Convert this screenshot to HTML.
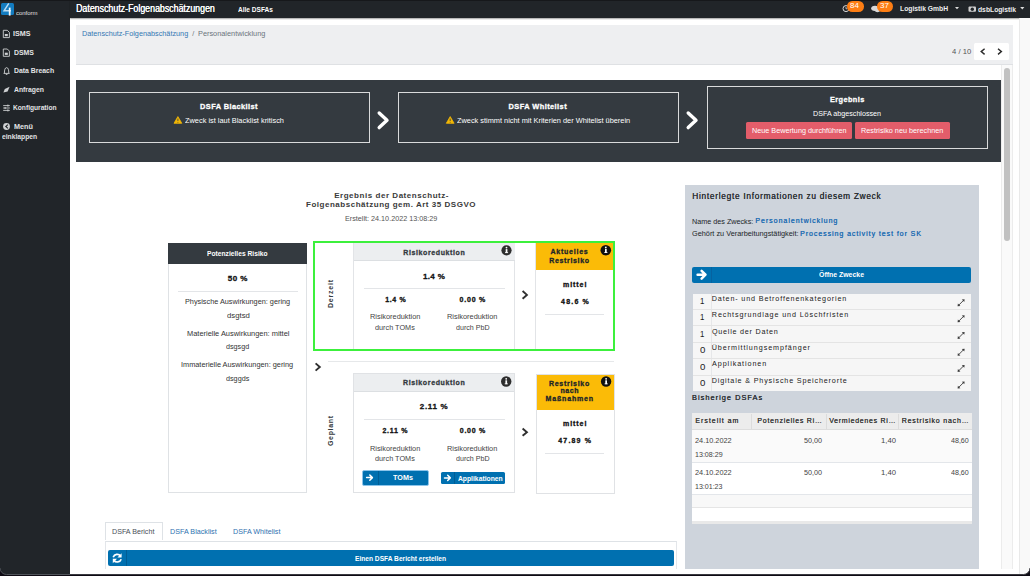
<!DOCTYPE html>
<html><head><meta charset="utf-8"><style>
*{box-sizing:border-box;margin:0;padding:0}
html,body{width:1030px;height:576px;overflow:hidden;background:#fff;font-family:"Liberation Sans",sans-serif;color:#212529}
.a{position:absolute}
svg{position:absolute;overflow:visible}

.t{position:absolute;white-space:nowrap;line-height:10px;transform-origin:0 0}
.bm{display:inline-block;width:0;height:0;vertical-align:baseline}
</style></head><body>
<!-- sidebar + topbar -->
<div class="a" style="left:0;top:0;width:70px;height:576px;background:#212529"></div>
<div class="a" style="left:70px;top:0;width:960px;height:18px;background:#212529;box-shadow:0 0.6px 1.2px rgba(0,0,0,0.35)"></div>
<div class="a" style="left:0;top:0;width:1030px;height:1px;background:#16181b"></div>
<!-- logo -->
<div class="a" style="left:1.2px;top:3px;width:12.8px;height:12.4px;background:#137cc0;border-radius:1.5px"></div>
<svg style="left:0;top:0" width="20" height="20"><path d="M8.8 3.4 L4.1 10.7 L11 10.7" fill="none" stroke="#b9dbf2" stroke-width="1.5" stroke-linejoin="miter"/><path d="M9.7 7.6 L9.7 15.6" stroke="#eef6fb" stroke-width="1.8"/></svg>
<!-- sidebar icons -->
<svg style="left:0;top:0" width="70" height="140">
 <g fill="none" stroke="#cfd1d3" stroke-width="0.9">
  <path d="M3.3 30.3 H7.3 L9.4 32.4 V37.6 H3.3 Z"/>
  <path d="M3.3 49 H7.3 L9.4 51.1 V56.3 H3.3 Z"/>
  <path d="M4.4 73.2 C4.4 70 5 67.6 6.6 67.6 C8.2 67.6 8.8 70 8.8 73.2 M3.6 73.4 H9.6 M5.8 74.4 H7.4"/>
  <path d="M3.2 105.6 H9.8 M3.2 108 H9.8 M3.2 110.4 H9.8"/>
 </g>
 <g fill="#cfd1d3">
  <rect x="4.8" y="34" width="3" height="2.2"/>
  <rect x="4.8" y="52.7" width="3" height="2.2"/>
  <path d="M3.4 92.6 L4.8 89 L9.6 86.8 L7.6 91.4 Z"/>
  <rect x="7.4" y="104.6" width="1" height="2" />
  <rect x="4.6" y="107" width="1" height="2" />
  <rect x="7.4" y="109.4" width="1" height="2" />
  <circle cx="6.5" cy="126.5" r="3.4"/>
 </g>
 <path d="M7.9 124.6 L5.8 126.5 L7.9 128.4" fill="none" stroke="#212529" stroke-width="1.1"/>
</svg>
<!-- topbar icons -->
<svg style="left:0;top:0" width="1030" height="18">
 <circle cx="846" cy="8.6" r="3" fill="none" stroke="#d8d8d8" stroke-width="1"/>
 <path d="M846 7 V8.8 H847.4" fill="none" stroke="#d8d8d8" stroke-width="0.8"/>
 <ellipse cx="875" cy="8.3" rx="3.8" ry="2.6" fill="#d8d8d8"/>
 <ellipse cx="877.5" cy="10.4" rx="2.6" ry="1.8" fill="#d8d8d8"/>
 <path d="M955 7 L959 7 L957 9.3 Z" fill="#dddddd"/>
 <rect x="968.5" y="6.5" width="7.5" height="5.3" rx="1" fill="#cfcfcf"/>
 <circle cx="972.3" cy="9.2" r="1.7" fill="#212529"/>
 <path d="M1020.2 7 L1024.4 7 L1022.3 9.4 Z" fill="#dddddd"/>
</svg>
<div class="a" style="left:847px;top:1.2px;width:17.2px;height:10.6px;border-radius:5.3px;background:#fd7e14"></div>
<div class="a" style="left:876.6px;top:0.6px;width:16.6px;height:11.2px;border-radius:5.6px;background:#fd7e14"></div>

<!-- outer scrollbar -->
<div class="a" style="left:1019px;top:17.5px;width:11px;height:560px;background:#f9f9f9;border-left:1px solid #e9e9e9"></div>
<!-- breadcrumb -->
<div class="a" style="left:76px;top:24.8px;width:937px;height:39.9px;background:#eeeff1;border-bottom:1px solid #dfe1e4"></div>
<div class="a" style="left:973.6px;top:43px;width:35px;height:17px;background:#fff;border-radius:1.5px"></div>
<svg style="left:0;top:0" width="1030" height="70">
 <path d="M984.6 48.8 L981.2 51.6 L984.6 54.4" fill="none" stroke="#2b2b2b" stroke-width="1.4"/>
 <path d="M998 48.8 L1001.4 51.6 L998 54.4" fill="none" stroke="#2b2b2b" stroke-width="1.4"/>
</svg>
<!-- inner scrollbar -->
<div class="a" style="left:1001px;top:64.7px;width:11.7px;height:504px;background:#fafafa;border-left:1px solid #ececec;border-right:1px solid #ececec"></div>
<div class="a" style="left:1004px;top:68px;width:6.3px;height:173px;background:#c1c1c1;border-radius:3.2px"></div>

<!-- banner -->
<div class="a" style="left:76px;top:80px;width:924.5px;height:82px;background:#343a40"></div>
<div class="a" style="left:88.7px;top:92.3px;width:281px;height:50.3px;border:1px solid #d9dadb"></div>
<div class="a" style="left:397.7px;top:92.3px;width:281px;height:50.3px;border:1px solid #d9dadb"></div>
<div class="a" style="left:706.7px;top:85.8px;width:281.3px;height:63.4px;border:1px solid #d9dadb"></div>
<svg style="left:0;top:0" width="1030" height="170">
 <path d="M379.2 113 L387 120.3 L379.2 127.6" fill="none" stroke="#fff" stroke-width="3.4" stroke-linecap="round" stroke-linejoin="round"/>
 <path d="M688.2 113 L696 120.3 L688.2 127.6" fill="none" stroke="#fff" stroke-width="3.4" stroke-linecap="round" stroke-linejoin="round"/>
 <path d="M177.9 116.6 L181.8 123.3 L174 123.3 Z" fill="#f2b705" stroke="#f2b705" stroke-width="0.8" stroke-linejoin="round"/>
 <path d="M450.2 116.6 L454.1 123.3 L446.3 123.3 Z" fill="#f2b705" stroke="#f2b705" stroke-width="0.8" stroke-linejoin="round"/>
 <path d="M177.9 118.6 V121 M177.9 121.9 V122.6 M450.2 118.6 V121 M450.2 121.9 V122.6" stroke="#343a40" stroke-width="0.8"/>
</svg>
<div class="a" style="left:745.7px;top:122px;width:106.7px;height:17.4px;background:#e35d6a;border-radius:1.5px"></div>
<div class="a" style="left:855.2px;top:122px;width:94.4px;height:17.4px;background:#e35d6a;border-radius:1.5px"></div>

<!-- potenzielles risiko -->
<div class="a" style="left:168.3px;top:242.5px;width:138.9px;height:250.5px;border:1px solid #dfe2e5"></div>
<div class="a" style="left:168.3px;top:242.5px;width:138.9px;height:21.7px;background:#343a40"></div>
<div class="a" style="left:178px;top:291px;width:120px;height:1px;background:#e3e5e8"></div>

<!-- derzeit: green box -->

<div class="a" style="left:353px;top:243px;width:162px;height:107.5px;border-left:1px solid #e2e4e7;border-right:1px solid #e2e4e7"></div>
<div class="a" style="left:354px;top:243px;width:160.5px;height:18.4px;background:#eceef0;border-bottom:1px solid #dcdfe2"></div>
<div class="a" style="left:363.7px;top:287.8px;width:141.3px;height:1px;background:#e3e5e8"></div>
<div class="a" style="left:535.4px;top:243px;width:78px;height:107.5px;border-left:1px solid #e2e4e7"></div>
<div class="a" style="left:536.4px;top:243px;width:77.2px;height:26.8px;background:#fbbb07"></div>
<div class="a" style="left:545.2px;top:313.8px;width:59.2px;height:1px;background:#e3e5e8"></div>
<div class="a" style="left:313px;top:241.1px;width:302px;height:110.4px;border:2px solid #3cf03c"></div>
<!-- geplant -->
<div class="a" style="left:328.4px;top:361px;width:286px;height:1px;background:#e6e8ea"></div>
<div class="a" style="left:353.2px;top:373.4px;width:161.6px;height:120px;border:1px solid #e0e2e5"></div>
<div class="a" style="left:354.2px;top:374.4px;width:159.6px;height:18px;background:#eceef0;border-bottom:1px solid #dcdfe2"></div>
<div class="a" style="left:363.6px;top:419.2px;width:141.4px;height:1px;background:#e3e5e8"></div>
<div class="a" style="left:535.5px;top:373.6px;width:79px;height:120px;border:1px solid #e0e2e5"></div>
<div class="a" style="left:536.5px;top:374.6px;width:77px;height:35px;background:#fbbb07"></div>
<div class="a" style="left:545.3px;top:453px;width:59.1px;height:1px;background:#e3e5e8"></div>
<!-- TOMs / Applikationen buttons -->
<div class="a" style="left:362px;top:469.6px;width:66.6px;height:16px;border:1px solid #8cc4ea;border-radius:2px;background:#0070b0"></div>
<div class="a" style="left:377.6px;top:470.6px;width:0.8px;height:14px;background:#005e96"></div>
<div class="a" style="left:440.7px;top:471.9px;width:64px;height:12.2px;border-radius:1.5px;background:#0070b0"></div>
<div class="a" style="left:454px;top:471.9px;width:0.8px;height:12.2px;background:#005e96"></div>
<svg style="left:0;top:0" width="1030" height="576">
 <g fill="none" stroke="#2f2f2f" stroke-width="1.9" stroke-linecap="butt" stroke-linejoin="miter">
  <path d="M522.6 291 L526.9 294.9 L522.6 298.8"/>
  <path d="M522.6 428.6 L526.9 432.2 L522.6 435.8"/>
  <path d="M315.6 363.4 L319.8 367 L315.6 370.6"/>
 </g>
 <g fill="#2d2d2d">
  <circle cx="506.5" cy="250.3" r="5.1"/><circle cx="605.8" cy="250.2" r="5.3" fill="#111"/>
  <circle cx="506.2" cy="381.5" r="5.2"/><circle cx="606.1" cy="381.5" r="5.2" fill="#111"/>
 </g>
 <g fill="#fff">
  <circle cx="506.5" cy="247.6" r="0.9"/><rect x="505.7" y="249.1" width="1.7" height="3.8"/><rect x="505" y="252.2" width="3.1" height="0.9"/>
  <circle cx="605.8" cy="247.5" r="0.9"/><rect x="605" y="249" width="1.7" height="3.8"/><rect x="604.3" y="252.1" width="3.1" height="0.9"/>
  <circle cx="506.2" cy="378.8" r="0.9"/><rect x="505.4" y="380.3" width="1.7" height="3.8"/><rect x="504.7" y="383.4" width="3.1" height="0.9"/>
  <circle cx="606.1" cy="378.8" r="0.9"/><rect x="605.3" y="380.3" width="1.7" height="3.8"/><rect x="604.6" y="383.4" width="3.1" height="0.9"/>
 </g>
 <g fill="none" stroke="#fff" stroke-width="1.5" stroke-linecap="round" stroke-linejoin="round">
  <path d="M366.6 477.6 H372.4 M369.8 475 L372.4 477.6 L369.8 480.2"/>
  <path d="M444.5 477.9 H450.3 M447.7 475.3 L450.3 477.9 L447.7 480.5"/>
 </g>
</svg>

<!-- right panel -->
<div class="a" style="left:685px;top:184.6px;width:293.7px;height:384px;background:#ced4dc"></div>
<div class="a" style="left:692.3px;top:266.7px;width:279px;height:16px;background:#0070b0;border-radius:2px"></div>
<div class="a" style="left:710.8px;top:266.7px;width:0.8px;height:16px;background:#0662a0"></div>
<svg style="left:0;top:0" width="1030" height="576">
 <path d="M697.6 274.7 H705 M701.6 270.8 L705.5 274.7 L701.6 278.6" fill="none" stroke="#fff" stroke-width="2.5" stroke-linecap="round" stroke-linejoin="round"/>
</svg>
<div class="a" style="left:692.6px;top:293.8px;width:278.4px;height:97.3px;background:#e4e4e4"></div>
<div class="a" style="left:692.6px;top:293.8px;width:278.4px;height:15.0px;background:#f6f6f6"></div>
<div class="a" style="left:711.1px;top:293.8px;width:0.7px;height:15.0px;background:#e6e7e9"></div>
<div class="a" style="left:692.6px;top:309.8px;width:278.4px;height:15.6px;background:#f6f6f6"></div>
<div class="a" style="left:711.1px;top:309.8px;width:0.7px;height:15.6px;background:#e6e7e9"></div>
<div class="a" style="left:692.6px;top:326.4px;width:278.4px;height:15.8px;background:#f6f6f6"></div>
<div class="a" style="left:711.1px;top:326.4px;width:0.7px;height:15.8px;background:#e6e7e9"></div>
<div class="a" style="left:692.6px;top:343.2px;width:278.4px;height:15.2px;background:#f6f6f6"></div>
<div class="a" style="left:711.1px;top:343.2px;width:0.7px;height:15.2px;background:#e6e7e9"></div>
<div class="a" style="left:692.6px;top:359.4px;width:278.4px;height:15.6px;background:#f6f6f6"></div>
<div class="a" style="left:711.1px;top:359.4px;width:0.7px;height:15.6px;background:#e6e7e9"></div>
<div class="a" style="left:692.6px;top:376.0px;width:278.4px;height:15.1px;background:#f6f6f6"></div>
<div class="a" style="left:711.1px;top:376.0px;width:0.7px;height:15.1px;background:#e6e7e9"></div>
<svg style="left:0;top:0" width="1030" height="576"><g fill="none" stroke="#3a3a3a" stroke-width="0.9"><path d="M958.6 305.3 L963.6 300.3"/><path d="M958.6 321.3 L963.6 316.3"/><path d="M958.6 337.9 L963.6 332.9"/><path d="M958.6 354.7 L963.6 349.7"/><path d="M958.6 370.9 L963.6 365.9"/><path d="M958.6 387.5 L963.6 382.5"/></g><g fill="#3a3a3a"><path d="M957.6 306.3 L957.9 303.5 L960.4 306.0 Z M964.6 299.3 L964.3 302.1 L961.8 299.6 Z"/><path d="M957.6 322.3 L957.9 319.5 L960.4 322.0 Z M964.6 315.3 L964.3 318.1 L961.8 315.6 Z"/><path d="M957.6 338.9 L957.9 336.1 L960.4 338.6 Z M964.6 331.9 L964.3 334.7 L961.8 332.2 Z"/><path d="M957.6 355.7 L957.9 352.9 L960.4 355.4 Z M964.6 348.7 L964.3 351.5 L961.8 349.0 Z"/><path d="M957.6 371.9 L957.9 369.1 L960.4 371.6 Z M964.6 364.9 L964.3 367.7 L961.8 365.2 Z"/><path d="M957.6 388.5 L957.9 385.7 L960.4 388.2 Z M964.6 381.5 L964.3 384.3 L961.8 381.8 Z"/></g></svg>
<!-- table -->
<div class="a" style="left:692px;top:413.2px;width:279.9px;height:16.5px;background:#ececec;border-bottom:1px solid #dddddd"></div>
<div class="a" style="left:751.2px;top:414px;width:1px;height:15px;background:#dcdcdc"></div>
<div class="a" style="left:825.5px;top:414px;width:1px;height:15px;background:#dcdcdc"></div>
<div class="a" style="left:898.1px;top:414px;width:1px;height:15px;background:#dcdcdc"></div>
<div class="a" style="left:692px;top:429.7px;width:279.9px;height:33.1px;background:#fafafa;border-bottom:1px solid #e3e6ea"></div>
<div class="a" style="left:692px;top:462.8px;width:279.9px;height:32px;background:#ffffff;border-bottom:1px solid #e3e6ea"></div>
<div class="a" style="left:692px;top:494.8px;width:279.9px;height:13.2px;background:#f8f8f8;border-bottom:1px solid #e5e5e5"></div>
<div class="a" style="left:692px;top:508px;width:279.9px;height:13.1px;background:#ffffff"></div>
<div class="a" style="left:692px;top:521.1px;width:279.9px;height:2.9px;background:#e9e9e9"></div>

<!-- tabs -->
<div class="a" style="left:104.8px;top:540.8px;width:572.2px;height:30px;border-left:1px solid #e3e6ea;border-right:1px solid #e3e6ea;border-top:1px solid #dee2e6"></div>
<div class="a" style="left:104.8px;top:521.8px;width:57.8px;height:18px;border:1px solid #dee2e6;border-bottom:none;background:#fff"></div>
<div class="a" style="left:107.8px;top:550.4px;width:566.3px;height:16.1px;background:#0070b0;border-radius:2px"></div>
<div class="a" style="left:126.2px;top:550.4px;width:0.8px;height:16.1px;background:#005d94"></div>
<svg style="left:0;top:0" width="1030" height="576">
 <g fill="none" stroke="#fff" stroke-width="1.7">
  <path d="M113.2 557.2 A4.2 4.2 0 0 1 120.6 556.2"/>
  <path d="M121.2 559.2 A4.2 4.2 0 0 1 113.8 560.2"/>
 </g>
 <path d="M121.6 553.2 V557.6 H117.4 Z M112.8 563.2 V558.8 H117 Z" fill="#fff"/>
</svg>
<!-- clip bottom of inner container -->
<div class="a" style="left:70px;top:569px;width:949px;height:6px;background:#fff"></div>
<!-- bottom frame -->
<svg style="left:0;top:0" width="1030" height="576">
 <path d="M0 568 V576 H1030 V568 A6.5 6.5 0 0 1 1023.5 574.5 H6.5 A6.5 6.5 0 0 1 0 568 Z" fill="#0e0b14"/>
 <path d="M0 568 A6.5 6.5 0 0 0 6.5 574.5 H70" fill="none" stroke="#50545a" stroke-width="1"/>
 <path d="M70 574.5 H1023.5 A6.5 6.5 0 0 0 1030 568" fill="none" stroke="#3a3a40" stroke-width="1"/>
</svg>

<div class="a" style="left:310.5px;top:289.3px;width:40px;height:10px;line-height:10px;font-size:7px;font-weight:bold;letter-spacing:0.8px;padding-left:0.8px;text-align:center;color:#343a40;transform:rotate(-90deg);white-space:nowrap">Derzeit</div>
<div class="a" style="left:311.3px;top:426px;width:40px;height:10px;line-height:10px;font-size:7px;font-weight:bold;letter-spacing:0.65px;padding-left:0.65px;text-align:center;color:#343a40;transform:rotate(-90deg);white-space:nowrap">Geplant</div>

<div class="t" id="t0" style="left:13.29px;top:29.01px;font-size:7.8px;font-weight:bold;color:#e2e3e5;letter-spacing:0.000px;transform:scaleX(0.9193);">ISMS<i class="bm"></i></div>
<div class="t" id="t1" style="left:13.90px;top:47.71px;font-size:7.8px;font-weight:bold;color:#e2e3e5;letter-spacing:0.000px;transform:scaleX(0.8871);">DSMS<i class="bm"></i></div>
<div class="t" id="t2" style="left:13.91px;top:65.90px;font-size:7.8px;font-weight:bold;color:#e2e3e5;letter-spacing:0.000px;transform:scaleX(0.8817);">Data Breach<i class="bm"></i></div>
<div class="t" id="t3" style="left:14.25px;top:85.01px;font-size:7.8px;font-weight:bold;color:#e2e3e5;letter-spacing:0.000px;transform:scaleX(0.8749);">Anfragen<i class="bm"></i></div>
<div class="t" id="t4" style="left:13.25px;top:103.01px;font-size:7.8px;font-weight:bold;color:#e2e3e5;letter-spacing:0.000px;transform:scaleX(0.8520);">Konfiguration<i class="bm"></i></div>
<div class="t" id="t5" style="left:13.80px;top:122.01px;font-size:7.8px;font-weight:bold;color:#e2e3e5;letter-spacing:0.000px;transform:scaleX(0.9273);">Menü<i class="bm"></i></div>
<div class="t" id="t6" style="left:1.74px;top:131.71px;font-size:7.8px;font-weight:bold;color:#e2e3e5;letter-spacing:0.000px;transform:scaleX(0.8639);">einklappen<i class="bm"></i></div>
<div class="t" id="t7" style="left:15.51px;top:7.60px;font-size:6px;font-weight:normal;color:#e0e0e0;letter-spacing:0.000px;transform:scaleX(0.9923);">conform<i class="bm"></i></div>
<div class="t" id="t8" style="left:76.05px;top:3.40px;font-size:10.6px;font-weight:normal;color:#ffffff;letter-spacing:0.000px;transform:scaleX(0.8321);text-shadow:0.3px 0 0 #ffffff;">Datenschutz-Folgenabschätzungen<i class="bm"></i></div>
<div class="t" id="t9" style="left:238.41px;top:4.76px;font-size:7.8px;font-weight:bold;color:#ffffff;letter-spacing:0.000px;transform:scaleX(0.8383);">Alle DSFAs<i class="bm"></i></div>
<div class="t" id="t10" style="left:850.12px;top:0.80px;font-size:6.6px;font-weight:normal;color:#ffffff;letter-spacing:0.000px;transform:scaleX(1.2053);">84<i class="bm"></i></div>
<div class="t" id="t11" style="left:879.70px;top:0.80px;font-size:6.6px;font-weight:normal;color:#ffffff;letter-spacing:0.000px;transform:scaleX(1.2183);">37<i class="bm"></i></div>
<div class="t" id="t12" style="left:900.45px;top:4.31px;font-size:7.4px;font-weight:bold;color:#eeeeee;letter-spacing:0.000px;transform:scaleX(0.9149);">Logistik GmbH<i class="bm"></i></div>
<div class="t" id="t13" style="left:978.42px;top:4.51px;font-size:7.4px;font-weight:bold;color:#eeeeee;letter-spacing:0.000px;transform:scaleX(0.9135);">dsbLogistik<i class="bm"></i></div>
<div class="t" id="t14" style="left:81.92px;top:29.00px;font-size:7.2px;font-weight:normal;color:#3377b3;letter-spacing:0.000px;transform:scaleX(1.0104);">Datenschutz-Folgenabschätzung<i class="bm"></i></div>
<div class="t" id="t15" style="left:192.34px;top:29.00px;font-size:7.2px;font-weight:normal;color:#6c757d;letter-spacing:0.000px;">/<i class="bm"></i></div>
<div class="t" id="t16" style="left:198.20px;top:29.00px;font-size:7.2px;font-weight:normal;color:#6c757d;letter-spacing:0.000px;transform:scaleX(1.0220);">Personalentwicklung<i class="bm"></i></div>
<div class="t" id="t17" style="left:952.20px;top:46.61px;font-size:7.4px;font-weight:normal;color:#555555;letter-spacing:0.000px;transform:scaleX(1.0360);">4 / 10<i class="bm"></i></div>
<div class="t" id="t18" style="left:200.08px;top:101.61px;font-size:7.4px;font-weight:bold;color:#ffffff;letter-spacing:0.417px;-webkit-text-stroke:0.3px currentColor;">DSFA Blacklist<i class="bm"></i></div>
<div class="t" id="t19" style="left:184.97px;top:115.81px;font-size:7.4px;font-weight:normal;color:#ffffff;letter-spacing:0.000px;transform:scaleX(0.9996);">Zweck ist laut Blacklist kritisch<i class="bm"></i></div>
<div class="t" id="t20" style="left:508.55px;top:101.61px;font-size:7.4px;font-weight:bold;color:#ffffff;letter-spacing:0.444px;-webkit-text-stroke:0.3px currentColor;">DSFA Whitelist<i class="bm"></i></div>
<div class="t" id="t21" style="left:457.21px;top:115.81px;font-size:7.4px;font-weight:normal;color:#ffffff;letter-spacing:0.000px;transform:scaleX(0.9967);">Zweck stimmt nicht mit Kriterien der Whitelist überein<i class="bm"></i></div>
<div class="t" id="t22" style="left:830.04px;top:94.81px;font-size:7.3px;font-weight:bold;color:#ffffff;letter-spacing:0.424px;-webkit-text-stroke:0.3px currentColor;">Ergebnis<i class="bm"></i></div>
<div class="t" id="t23" style="left:812.92px;top:109.31px;font-size:7.0px;font-weight:normal;color:#ffffff;letter-spacing:0.000px;transform:scaleX(1.0228);">DSFA abgeschlossen<i class="bm"></i></div>
<div class="t" id="t24" style="left:751.64px;top:125.61px;font-size:7.0px;font-weight:normal;color:#ffffff;letter-spacing:0.000px;transform:scaleX(1.0344);">Neue Bewertung durchführen<i class="bm"></i></div>
<div class="t" id="t25" style="left:861.08px;top:125.61px;font-size:7.0px;font-weight:normal;color:#ffffff;letter-spacing:0.000px;transform:scaleX(1.0364);">Restrisiko neu berechnen<i class="bm"></i></div>
<div class="t" id="t26" style="left:334.14px;top:190.60px;font-size:8.0px;font-weight:bold;color:#3a3a3a;letter-spacing:0.543px;">Ergebnis der Datenschutz-<i class="bm"></i></div>
<div class="t" id="t27" style="left:305.99px;top:199.91px;font-size:8.0px;font-weight:bold;color:#3a3a3a;letter-spacing:0.522px;">Folgenabschätzung gem. Art 35 DSGVO<i class="bm"></i></div>
<div class="t" id="t28" style="left:344.57px;top:213.50px;font-size:7.0px;font-weight:normal;color:#555555;letter-spacing:0.000px;transform:scaleX(1.0313);">Erstellt: 24.10.2022 13:08:29<i class="bm"></i></div>
<div class="t" id="t29" style="left:207.18px;top:248.81px;font-size:7.2px;font-weight:bold;color:#ffffff;letter-spacing:0.000px;transform:scaleX(0.9300);">Potenzielles Risiko<i class="bm"></i></div>
<div class="t" id="t30" style="left:227.76px;top:274.41px;font-size:8.0px;font-weight:bold;color:#111111;letter-spacing:0.430px;-webkit-text-stroke:0.3px currentColor;">50 %<i class="bm"></i></div>
<div class="t" id="t31" style="left:185.38px;top:296.91px;font-size:7.0px;font-weight:normal;color:#333333;letter-spacing:0.000px;transform:scaleX(1.0433);">Physische Auswirkungen: gering<i class="bm"></i></div>
<div class="t" id="t32" style="left:226.62px;top:310.81px;font-size:7.0px;font-weight:normal;color:#333333;letter-spacing:0.000px;transform:scaleX(1.1089);">dsgtsd<i class="bm"></i></div>
<div class="t" id="t33" style="left:186.70px;top:328.61px;font-size:7.0px;font-weight:normal;color:#333333;letter-spacing:0.000px;transform:scaleX(1.0620);">Materielle Auswirkungen: mittel<i class="bm"></i></div>
<div class="t" id="t34" style="left:225.69px;top:342.41px;font-size:7.0px;font-weight:normal;color:#333333;letter-spacing:0.000px;transform:scaleX(1.0261);">dsgsgd<i class="bm"></i></div>
<div class="t" id="t35" style="left:181.15px;top:360.21px;font-size:7.0px;font-weight:normal;color:#333333;letter-spacing:0.000px;transform:scaleX(1.0483);">Immaterielle Auswirkungen: gering<i class="bm"></i></div>
<div class="t" id="t36" style="left:225.65px;top:374.00px;font-size:7.0px;font-weight:normal;color:#333333;letter-spacing:0.000px;transform:scaleX(1.0305);">dsggds<i class="bm"></i></div>
<div class="t" id="t37" style="left:403.33px;top:247.50px;font-size:7.0px;font-weight:bold;color:#343a40;letter-spacing:0.603px;-webkit-text-stroke:0.3px currentColor;">Risikoreduktion<i class="bm"></i></div>
<div class="t" id="t38" style="left:423.00px;top:271.71px;font-size:8.0px;font-weight:bold;color:#111111;letter-spacing:0.340px;-webkit-text-stroke:0.3px currentColor;">1.4 %<i class="bm"></i></div>
<div class="t" id="t39" style="left:385.26px;top:294.61px;font-size:7.0px;font-weight:bold;color:#111111;letter-spacing:0.628px;-webkit-text-stroke:0.3px currentColor;">1.4 %<i class="bm"></i></div>
<div class="t" id="t40" style="left:459.54px;top:294.61px;font-size:7.0px;font-weight:bold;color:#111111;letter-spacing:0.798px;-webkit-text-stroke:0.3px currentColor;">0.00 %<i class="bm"></i></div>
<div class="t" id="t41" style="left:370.36px;top:312.41px;font-size:7.0px;font-weight:normal;color:#444444;letter-spacing:0.000px;transform:scaleX(1.0536);">Risikoreduktion<i class="bm"></i></div>
<div class="t" id="t42" style="left:374.93px;top:322.81px;font-size:7.0px;font-weight:normal;color:#444444;letter-spacing:0.000px;transform:scaleX(1.0395);">durch TOMs<i class="bm"></i></div>
<div class="t" id="t43" style="left:446.81px;top:312.41px;font-size:7.0px;font-weight:normal;color:#444444;letter-spacing:0.000px;transform:scaleX(1.0536);">Risikoreduktion<i class="bm"></i></div>
<div class="t" id="t44" style="left:455.54px;top:322.81px;font-size:7.0px;font-weight:normal;color:#444444;letter-spacing:0.000px;transform:scaleX(1.0144);">durch PbD<i class="bm"></i></div>
<div class="t" id="t45" style="left:550.43px;top:247.21px;font-size:7.0px;font-weight:bold;color:#212529;letter-spacing:0.774px;-webkit-text-stroke:0.3px currentColor;">Aktuelles<i class="bm"></i></div>
<div class="t" id="t46" style="left:549.31px;top:255.50px;font-size:7.0px;font-weight:bold;color:#212529;letter-spacing:0.651px;-webkit-text-stroke:0.3px currentColor;">Restrisiko<i class="bm"></i></div>
<div class="t" id="t47" style="left:563.10px;top:279.71px;font-size:7.0px;font-weight:bold;color:#111111;letter-spacing:0.924px;-webkit-text-stroke:0.3px currentColor;">mittel<i class="bm"></i></div>
<div class="t" id="t48" style="left:561.06px;top:297.41px;font-size:7.0px;font-weight:bold;color:#111111;letter-spacing:1.200px;-webkit-text-stroke:0.3px currentColor;">48.6 %<i class="bm"></i></div>
<div class="t" id="t49" style="left:402.94px;top:378.41px;font-size:7.0px;font-weight:bold;color:#343a40;letter-spacing:0.638px;-webkit-text-stroke:0.3px currentColor;">Risikoreduktion<i class="bm"></i></div>
<div class="t" id="t50" style="left:419.85px;top:402.41px;font-size:8.0px;font-weight:bold;color:#111111;letter-spacing:0.637px;-webkit-text-stroke:0.3px currentColor;">2.11 %<i class="bm"></i></div>
<div class="t" id="t51" style="left:382.49px;top:425.81px;font-size:7.0px;font-weight:bold;color:#111111;letter-spacing:0.741px;-webkit-text-stroke:0.3px currentColor;">2.11 %<i class="bm"></i></div>
<div class="t" id="t52" style="left:459.78px;top:426.00px;font-size:7.0px;font-weight:bold;color:#111111;letter-spacing:0.756px;-webkit-text-stroke:0.3px currentColor;">0.00 %<i class="bm"></i></div>
<div class="t" id="t53" style="left:370.34px;top:444.00px;font-size:7.0px;font-weight:normal;color:#444444;letter-spacing:0.000px;transform:scaleX(1.0504);">Risikoreduktion<i class="bm"></i></div>
<div class="t" id="t54" style="left:374.93px;top:453.91px;font-size:7.0px;font-weight:normal;color:#444444;letter-spacing:0.000px;transform:scaleX(1.0395);">durch TOMs<i class="bm"></i></div>
<div class="t" id="t55" style="left:446.78px;top:443.81px;font-size:7.0px;font-weight:normal;color:#444444;letter-spacing:0.000px;transform:scaleX(1.0504);">Risikoreduktion<i class="bm"></i></div>
<div class="t" id="t56" style="left:455.54px;top:454.00px;font-size:7.0px;font-weight:normal;color:#444444;letter-spacing:0.000px;transform:scaleX(1.0144);">durch PbD<i class="bm"></i></div>
<div class="t" id="t57" style="left:392.70px;top:473.21px;font-size:7.0px;font-weight:bold;color:#ffffff;letter-spacing:0.000px;transform:scaleX(1.0294);">TOMs<i class="bm"></i></div>
<div class="t" id="t58" style="left:457.68px;top:473.50px;font-size:7.0px;font-weight:bold;color:#ffffff;letter-spacing:0.000px;transform:scaleX(0.9643);">Applikationen<i class="bm"></i></div>
<div class="t" id="t59" style="left:548.99px;top:378.61px;font-size:7.0px;font-weight:bold;color:#212529;letter-spacing:0.708px;-webkit-text-stroke:0.3px currentColor;">Restrisiko<i class="bm"></i></div>
<div class="t" id="t60" style="left:560.40px;top:386.11px;font-size:7.0px;font-weight:bold;color:#212529;letter-spacing:0.609px;-webkit-text-stroke:0.3px currentColor;">nach<i class="bm"></i></div>
<div class="t" id="t61" style="left:545.61px;top:394.31px;font-size:7.0px;font-weight:bold;color:#212529;letter-spacing:0.828px;-webkit-text-stroke:0.3px currentColor;">Maßnahmen<i class="bm"></i></div>
<div class="t" id="t62" style="left:563.10px;top:418.50px;font-size:7.0px;font-weight:bold;color:#111111;letter-spacing:0.914px;-webkit-text-stroke:0.3px currentColor;">mittel<i class="bm"></i></div>
<div class="t" id="t63" style="left:558.25px;top:436.00px;font-size:7.0px;font-weight:bold;color:#111111;letter-spacing:1.175px;-webkit-text-stroke:0.3px currentColor;">47.89 %<i class="bm"></i></div>
<div class="t" id="t64" style="left:692.23px;top:190.60px;font-size:8.3px;font-weight:normal;color:#2b2f33;letter-spacing:0.721px;text-shadow:0.12px 0 0 #2b2f33;">Hinterlegte Informationen zu diesem Zweck<i class="bm"></i></div>
<div class="t" id="t65" style="left:692.21px;top:216.50px;font-size:7.0px;font-weight:normal;color:#212529;letter-spacing:0.000px;transform:scaleX(1.0305);">Name des Zwecks:<i class="bm"></i></div>
<div class="t" id="t66" style="left:755.23px;top:216.11px;font-size:7.0px;font-weight:normal;color:#1e6db3;letter-spacing:0.986px;text-shadow:0.3px 0 0 #1e6db3;">Personalentwicklung<i class="bm"></i></div>
<div class="t" id="t67" style="left:692.26px;top:229.31px;font-size:7.0px;font-weight:normal;color:#212529;letter-spacing:0.000px;transform:scaleX(1.0449);">Gehört zu Verarbeitungstätigkeit:<i class="bm"></i></div>
<div class="t" id="t68" style="left:799.97px;top:229.10px;font-size:7.0px;font-weight:normal;color:#1e6db3;letter-spacing:0.942px;text-shadow:0.3px 0 0 #1e6db3;">Processing activity test for SK<i class="bm"></i></div>
<div class="t" id="t69" style="left:818.53px;top:269.91px;font-size:7.0px;font-weight:bold;color:#ffffff;letter-spacing:0.000px;transform:scaleX(0.9881);">Öffne Zwecke<i class="bm"></i></div>
<div class="t" id="t70" style="left:711.83px;top:293.61px;font-size:7.2px;font-weight:normal;color:#1a1a1a;letter-spacing:0.850px;">Daten- und Betroffenenkategorien<i class="bm"></i></div>
<div class="t" id="t71" style="left:699.64px;top:296.01px;font-size:8.6px;font-weight:normal;color:#222222;letter-spacing:0.000px;transform:scaleX(0.9119);">1<i class="bm"></i></div>
<div class="t" id="t72" style="left:711.83px;top:310.07px;font-size:7.2px;font-weight:normal;color:#1a1a1a;letter-spacing:0.879px;">Rechtsgrundlage und Löschfristen<i class="bm"></i></div>
<div class="t" id="t73" style="left:699.64px;top:312.46px;font-size:8.6px;font-weight:normal;color:#222222;letter-spacing:0.000px;transform:scaleX(0.9119);">1<i class="bm"></i></div>
<div class="t" id="t74" style="left:711.99px;top:326.53px;font-size:7.2px;font-weight:normal;color:#1a1a1a;letter-spacing:0.754px;">Quelle der Daten<i class="bm"></i></div>
<div class="t" id="t75" style="left:699.64px;top:328.93px;font-size:8.6px;font-weight:normal;color:#222222;letter-spacing:0.000px;transform:scaleX(0.9119);">1<i class="bm"></i></div>
<div class="t" id="t76" style="left:711.76px;top:342.99px;font-size:7.2px;font-weight:normal;color:#1a1a1a;letter-spacing:0.929px;">Übermittlungsempfänger<i class="bm"></i></div>
<div class="t" id="t77" style="left:699.58px;top:345.39px;font-size:8.6px;font-weight:normal;color:#222222;letter-spacing:0.000px;transform:scaleX(1.1250);">0<i class="bm"></i></div>
<div class="t" id="t78" style="left:712.07px;top:359.45px;font-size:7.2px;font-weight:normal;color:#1a1a1a;letter-spacing:0.921px;">Applikationen<i class="bm"></i></div>
<div class="t" id="t79" style="left:699.58px;top:361.85px;font-size:8.6px;font-weight:normal;color:#222222;letter-spacing:0.000px;transform:scaleX(1.1250);">0<i class="bm"></i></div>
<div class="t" id="t80" style="left:711.83px;top:375.91px;font-size:7.2px;font-weight:normal;color:#1a1a1a;letter-spacing:0.832px;">Digitale &amp; Physische Speicherorte<i class="bm"></i></div>
<div class="t" id="t81" style="left:699.58px;top:378.30px;font-size:8.6px;font-weight:normal;color:#222222;letter-spacing:0.000px;transform:scaleX(1.1250);">0<i class="bm"></i></div>
<div class="t" id="t82" style="left:692.01px;top:392.60px;font-size:7.4px;font-weight:normal;color:#2b2f33;letter-spacing:1.019px;text-shadow:0.12px 0 0 #2b2f33;">Bisherige DSFAs<i class="bm"></i></div>
<div class="t" id="t83" style="left:695.37px;top:415.71px;font-size:7.0px;font-weight:normal;color:#3a3a3a;letter-spacing:0.989px;text-shadow:0.1px 0 0 #3a3a3a;">Erstellt am<i class="bm"></i></div>
<div class="t" id="t84" style="left:757.37px;top:415.71px;font-size:7.0px;font-weight:normal;color:#3a3a3a;letter-spacing:0.746px;text-shadow:0.1px 0 0 #3a3a3a;">Potenzielles Ri…<i class="bm"></i></div>
<div class="t" id="t85" style="left:829.13px;top:415.71px;font-size:7.0px;font-weight:normal;color:#3a3a3a;letter-spacing:0.708px;text-shadow:0.1px 0 0 #3a3a3a;">Vermiedenes Ri…<i class="bm"></i></div>
<div class="t" id="t86" style="left:901.69px;top:415.71px;font-size:7.0px;font-weight:normal;color:#3a3a3a;letter-spacing:0.804px;text-shadow:0.1px 0 0 #3a3a3a;">Restrisiko nach…<i class="bm"></i></div>
<div class="t" id="t87" style="left:694.64px;top:435.71px;font-size:6.8px;font-weight:normal;color:#444444;letter-spacing:0.000px;transform:scaleX(1.0768);">24.10.2022<i class="bm"></i></div>
<div class="t" id="t88" style="left:695.24px;top:449.71px;font-size:6.8px;font-weight:normal;color:#444444;letter-spacing:0.000px;transform:scaleX(1.0434);">13:08:29<i class="bm"></i></div>
<div class="t" id="t89" style="left:804.14px;top:435.71px;font-size:6.8px;font-weight:normal;color:#444444;letter-spacing:0.000px;transform:scaleX(1.0600);">50,00<i class="bm"></i></div>
<div class="t" id="t90" style="left:881.37px;top:435.71px;font-size:6.8px;font-weight:normal;color:#444444;letter-spacing:0.000px;transform:scaleX(1.1263);">1,40<i class="bm"></i></div>
<div class="t" id="t91" style="left:951.16px;top:435.71px;font-size:6.8px;font-weight:normal;color:#444444;letter-spacing:0.000px;transform:scaleX(1.0449);">48,60<i class="bm"></i></div>
<div class="t" id="t92" style="left:694.64px;top:467.61px;font-size:6.8px;font-weight:normal;color:#444444;letter-spacing:0.000px;transform:scaleX(1.0768);">24.10.2022<i class="bm"></i></div>
<div class="t" id="t93" style="left:695.24px;top:481.61px;font-size:6.8px;font-weight:normal;color:#444444;letter-spacing:0.000px;transform:scaleX(1.0378);">13:01:23<i class="bm"></i></div>
<div class="t" id="t94" style="left:804.14px;top:467.61px;font-size:6.8px;font-weight:normal;color:#444444;letter-spacing:0.000px;transform:scaleX(1.0600);">50,00<i class="bm"></i></div>
<div class="t" id="t95" style="left:881.37px;top:467.61px;font-size:6.8px;font-weight:normal;color:#444444;letter-spacing:0.000px;transform:scaleX(1.1263);">1,40<i class="bm"></i></div>
<div class="t" id="t96" style="left:951.16px;top:467.61px;font-size:6.8px;font-weight:normal;color:#444444;letter-spacing:0.000px;transform:scaleX(1.0449);">48,60<i class="bm"></i></div>
<div class="t" id="t97" style="left:112.16px;top:527.00px;font-size:7.0px;font-weight:normal;color:#495057;letter-spacing:0.000px;transform:scaleX(1.0181);">DSFA Bericht<i class="bm"></i></div>
<div class="t" id="t98" style="left:170.49px;top:527.00px;font-size:7.0px;font-weight:normal;color:#2f72b0;letter-spacing:0.000px;transform:scaleX(1.0254);">DSFA Blacklist<i class="bm"></i></div>
<div class="t" id="t99" style="left:232.99px;top:527.00px;font-size:7.0px;font-weight:normal;color:#2f72b0;letter-spacing:0.000px;transform:scaleX(1.0240);">DSFA Whitelist<i class="bm"></i></div>
<div class="t" id="t100" style="left:354.61px;top:553.50px;font-size:7.0px;font-weight:bold;color:#ffffff;letter-spacing:0.000px;transform:scaleX(0.9459);">Einen DSFA Bericht erstellen<i class="bm"></i></div>
</body></html>
